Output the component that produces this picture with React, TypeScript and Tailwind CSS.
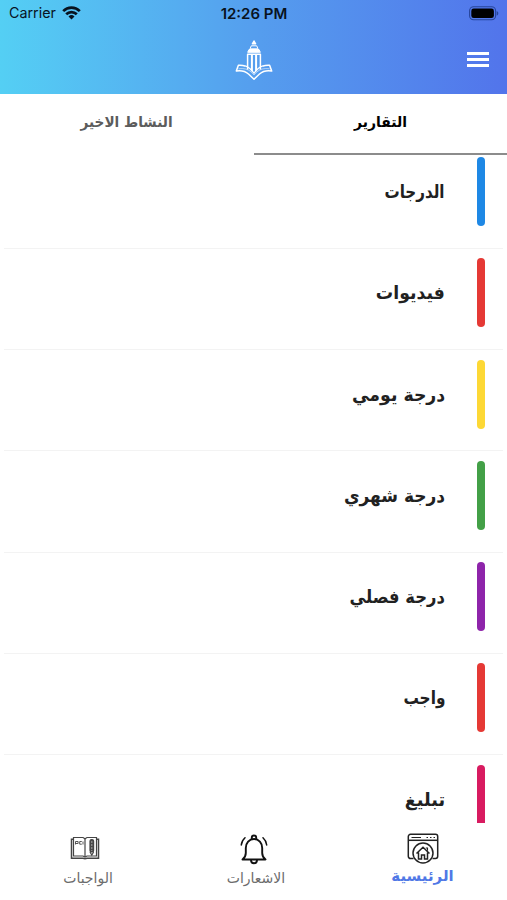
const reports = [
  { title: 'الدرجات', bar: 'bg-[#1e88e5]', fit: 'scale-x-[0.84]' },
  { title: 'فيديوات', bar: 'bg-[#e53935]', fit: 'scale-x-[0.96]' },
  { title: 'درجة يومي', bar: 'bg-[#fdd835]', fit: 'scale-x-[0.96]' },
  { title: 'درجة شهري', bar: 'bg-[#43a047]', fit: 'scale-x-[0.945]' },
  { title: 'درجة فصلي', bar: 'bg-[#8e24aa]', fit: 'scale-x-[0.91]' },
  { title: 'واجب', bar: 'bg-[#e53935]', fit: 'scale-x-[0.85]' },
  { title: 'تبليغ', bar: 'bg-[#d81b60]', fit: 'scale-x-[0.98]' },
];

function WifiIcon() {
  return (
    <svg width="19" height="14" viewBox="0 0 19 14" fill="none" stroke="#08131f" strokeWidth="2.7">
      <path d="M1.2 5.1a11.8 11.8 0 0 1 16.6 0" />
      <path d="M4.2 8.3a7.5 7.5 0 0 1 10.6 0" />
      <path d="M9.5 13.5 6.5 10.5a4.3 4.3 0 0 1 6 0Z" fill="#08131f" stroke="none" />
    </svg>
  );
}

function BatteryIcon() {
  return (
    <svg width="30" height="15" viewBox="0 0 30 15">
      <rect x="0.6" y="0.8" width="26" height="13" rx="4" fill="none" stroke="#27459a" strokeWidth="1.1" />
      <rect x="2.3" y="2.5" width="22.6" height="9.6" rx="2.4" fill="#000" />
      <path d="M27.7 5v4.6c1-.4 1.6-1.3 1.6-2.3s-.6-1.9-1.6-2.3Z" fill="#27459a" />
    </svg>
  );
}

function Logo() {
  return (
    <svg width="38" height="42" viewBox="0 0 38 42" fill="none" stroke="#fff" strokeWidth="1.5" strokeLinejoin="round">
      <path d="M17.4 3.800 19 1l1.600 2.800Z" fill="#fff" />
      <path d="M16.300 5.800h5.400l1.300 3H15Z" strokeWidth="1" />
      <path d="M14 9.500h10l1.300 2.800H12.700Z" fill="#fff" strokeWidth="1" />
      <path d="M12.600 29.500V14.300h12.800v15.200" />
      <path d="M16.900 14.300v17M21.100 14.300v17" strokeWidth="2" />
      <path d="M10.800 26.200c-2.800-1-5-1.200-7.400-1L1.300 31c4.500-.8 9 .2 12.200 3l5.500 5.300 5.500-5.300c3.200-2.800 7.700-3.800 12.200-3l-2.100-5.800c-2.400-.2-4.600 0-7.400 1" />
      <path d="M3.400 28.800c6-.8 9.800.4 13 3.400l2.600 2.800 2.600-2.800c3.200-3 7-4.200 13-3.400" strokeWidth="1" strokeOpacity=".55" />
      <path d="M10.800 26.200c3 1 5.900 4 8.200 7 2.300-3 5.200-6 8.200-7" strokeWidth="1.300" />
    </svg>
  );
}

function BookIcon() {
  return (
    <svg width="30" height="24" viewBox="0 0 30 24" fill="none" stroke="#454545" strokeWidth="1.2">
      <path d="M3.500 1.500H13l2 1.200 2-1.200h9.500V20H17l-2 1-2-1H3.500Z" />
      <path d="M3.500 3.300h-2v18.900H13l2 .6 2-.6h11.500V3.300h-2" strokeWidth="1.500" />
      <path d="M15 3v18" />
      <path d="M5.500 8.500v-3h2.600v2H5.500M11.800 5.500H9.700v2.700h2.100M13 5.500v3" strokeWidth=".9" />
      <rect x="20" y="3.500" width="3.600" height="12.500" rx="1.600" fill="#4a4a4a" />
      <path d="m20 16 1.800 3 1.800-3" />
      <path d="M21.800 5v10" stroke="#ccc" strokeWidth=".7" strokeDasharray="2 1" />
    </svg>
  );
}

function BellIcon() {
  return (
    <svg width="28" height="31" viewBox="0 0 28 31" fill="none" stroke="#111" strokeWidth="1.900" strokeLinecap="round" strokeLinejoin="round">
      <path d="M2.500 25.500c2.300-1.800 3.300-3.600 3.300-6.500v-5c0-5 3.400-9 8.200-9s8.200 4 8.200 9v5c0 2.900 1 4.700 3.300 6.500Z" />
      <path d="M11.800 5V3.700a2.200 2.200 0 0 1 4.400 0V5M11 26c0 4.300 6 4.300 6 0" />
      <path d="M5 3.700C2.800 5.700 1.600 8 1.300 11M23 3.700c2.200 2 3.400 4.300 3.700 7.300" strokeWidth="1.500" />
    </svg>
  );
}

function HomeIcon() {
  return (
    <svg width="32" height="31" viewBox="0 0 32 31" fill="none" stroke="#222" strokeWidth="1.500">
      <path d="M6.500 25.500h-3a2.200 2.200 0 0 1-2.200-2.200V3.500c0-1.200 1-2.200 2.200-2.200h25c1.200 0 2.200 1 2.200 2.200v19.800c0 1.200-1 2.200-2.200 2.200h-3" />
      <path d="M1.300 7.300h29.400" />
      <path d="M4.500 4.500H14M19.500 4.500H21M23 4.500h1.500M26.500 4.500H28" strokeWidth="1.200" />
      <circle cx="16" cy="20" r="10" fill="#fff" />
      <path d="m9.500 20.500 6.500-6.200 6.500 6.200M11.500 19.500V26h3v-4h3v4h3v-6.500" />
      <path d="M20.500 17.800V15h-1.700" strokeWidth="1.100" />
    </svg>
  );
}

export default function App() {
  return (
    <div dir="rtl" className="flex h-[900px] w-[507px] flex-col overflow-hidden bg-white font-['DejaVu_Sans',sans-serif]">
      <header dir="ltr" className="h-[94px] shrink-0 bg-linear-to-r from-[#54cff4] via-[#559eee] to-[#5274eb]">
        <div className="grid h-7 grid-cols-3 items-center pr-[8px] pl-[9px] font-['Inter',sans-serif] text-[#08131f]">
          <div className="flex items-center gap-1.5 pb-0.5">
            <span className="text-[14.3px]">Carrier</span>
            <WifiIcon />
          </div>
          <span className="text-center text-[15px] font-semibold whitespace-nowrap">12:26 PM</span>
          <div className="flex justify-end pb-0.5">
            <BatteryIcon />
          </div>
        </div>
        <div className="grid h-[66px] grid-cols-3 items-center px-[18px]">
          <span />
          <div className="flex justify-center pb-px">
            <Logo />
          </div>
          <div className="flex flex-col items-end gap-[3px] pb-[3px]">
            <span className="h-[3px] w-[22px] bg-white" />
            <span className="h-[3px] w-[22px] bg-white" />
            <span className="h-[3px] w-[22px] bg-white" />
          </div>
        </div>
      </header>

      <nav className="flex h-[61px] shrink-0 text-[15px] font-bold">
        <button className="flex-1 border-b-[2.5px] border-[#8c8c8c] pb-0.5 text-black">
          <span className="inline-block scale-x-[0.93]">التقارير</span>
        </button>
        <button className="flex-1 pb-1 text-[#5c5c5c]">
          <span className="inline-block scale-x-[0.91]">النشاط الاخير</span>
        </button>
      </nav>

      <main className="min-h-0 flex-1 overflow-hidden">
        <div className="-mt-[7.500px] px-1">
          {reports.map((item) => (
            <div key={item.title} className="flex h-[101.3px] gap-8 border-b border-[#f3f3f3] pt-[9.500px] pr-[18px]">
              <span className={`h-[69px] w-2 shrink-0 rounded-full ${item.bar}`} />
              <h2 className={`flex h-[69px] origin-right items-center text-[18px] font-bold text-[#212121] ${item.fit}`}>
                {item.title}
              </h2>
            </div>
          ))}
        </div>
      </main>

      <footer className="grid h-[77px] shrink-0 grid-cols-3 text-[14px] text-[#6c6c6c]">
        <button className="flex flex-col items-center gap-px pt-[10px]">
          <HomeIcon />
          <span className="text-[15px] font-bold text-[#5078e6]">الرئيسية</span>
        </button>
        <button className="flex flex-col items-center gap-[3px] pt-[11px]">
          <BellIcon />
          <span className="pl-[5px]">الاشعارات</span>
        </button>
        <button className="flex flex-col items-center gap-2 pt-[13px]">
          <BookIcon />
          <span className="pl-[7px]">الواجبات</span>
        </button>
      </footer>
    </div>
  );
}
